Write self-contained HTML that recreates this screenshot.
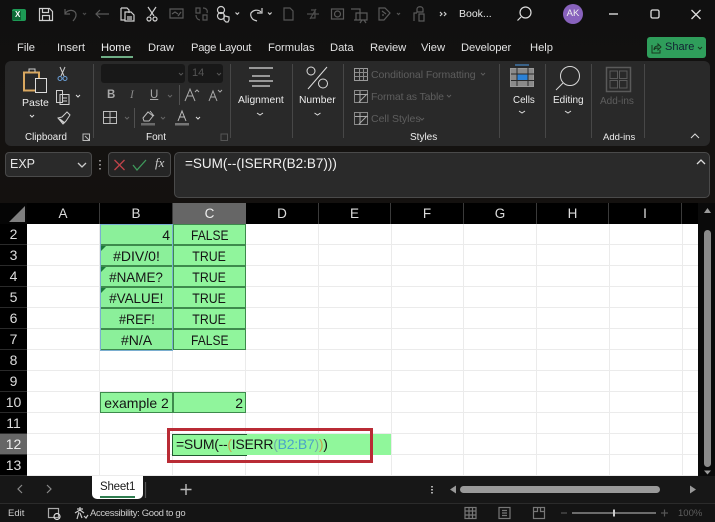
<!DOCTYPE html>
<html><head><meta charset="utf-8"><style>
*{box-sizing:border-box}
html,body{margin:0;padding:0;background:#111}
body{width:715px;height:522px;overflow:hidden;position:relative;font-family:"Liberation Sans",sans-serif;color:#e6e6e6}
.a{position:absolute;white-space:nowrap}
.m{font-size:11.2px;color:#e2e2e2;top:42px}
.l{font-size:10.5px;color:#ededed;text-align:center}
.d{font-size:10.5px;color:#5e5e5e}
svg{position:absolute;overflow:visible}
.c{position:absolute;height:21px;font-size:14px;color:#151515;line-height:21px;text-align:center;background:#90f59c;border:1px solid #3d8a4c;white-space:nowrap}
.s{display:inline-block;transform:scaleX(.86)}
.h{position:absolute;left:0;width:27px;height:21px;background:#000;color:#ddd;font-size:14px;line-height:21px;text-align:center;border-bottom:1px solid #2a2a2a}
.ch{position:absolute;top:203px;height:21px;background:#000;color:#ddd;font-size:13.5px;line-height:21px;text-align:center;border-right:1px solid #3a3a3a}
.tri{position:absolute;width:0;height:0;border-top:5px solid #1b7a3a;border-right:5px solid transparent}
</style></head><body>
<div class="a" style="left:0;top:0;width:715px;height:204px;background:linear-gradient(#101010,#141211 60%,#14110f)"></div>

<!-- title bar -->
<svg style="left:0;top:0" width="715" height="36" fill="none" stroke="#cfcfcf" stroke-width="1.200">
<rect x="12" y="9" width="14" height="12" rx="2" fill="#1d9a55" stroke="none"/>
<rect x="12" y="11" width="9" height="9" fill="#0e6a38" stroke="none"/>
<path d="M39.500 8.500h10l3 3v9h-13z M42.500 8.500v4h6v-4 M42.500 20.500v-5h7v5"/>
<path d="M65 9v5h5 M65 14c2-5 11-5 11 1 0 3-1.500 4-3 6" stroke="#5a5a5a"/>
<path d="M83 13l1.500 1.500 1.500-1.500" stroke="#4a4a4a"/>
<path d="M96 14h13 M100 10l-4 4 4 4" stroke="#5a5a5a"/>
<path d="M121 8h6l2 2v3 M121 8v12h4 M125 12h6l3 3v6h-9z M127 17h5 M127 19h5"/>
<path d="M148 7l6 9 M156 7l-6 9"/><circle cx="149" cy="19" r="2"/><circle cx="155" cy="19" r="2"/>
<path d="M170 9h13v9h-13z M172 14l3-2 3 2 M178 16l3-4" stroke="#5a5a5a"/>
<path d="M196 8h4v5h-4z M203 15h4v5h-4z M203 8c3 0 5 2 4 5 M196 15c0 3 2 5 4 5" stroke="#555"/>
<circle cx="221" cy="10" r="3.500"/><circle cx="221" cy="16" r="3.500"/><path d="M224 14v6l2 2h2l1-2v-3l-4-1"/>
<path d="M235.500 12.500l1.800 1.800 1.800-1.800"/>
<path d="M262 8v5h-5 M261 12c-3-3-8-2-10 1-1 3 1 6 3 7l3 1"/>
<path d="M268 12.500l1.800 1.800 1.800-1.800"/>
<path d="M284 8h6l3 3v9h-9z" stroke="#555"/>
<path d="M307 14h12 M310 19l6-10 M311 10h4v8h-4" stroke="#4e4e4e"/>
<rect x="331.500" y="9" width="12" height="10" stroke="#5a5a5a"/><circle cx="337.500" cy="14" r="3" stroke="#5a5a5a"/>
<path d="M351 9h9v11h-6 M356 13h11v7h-11z M362 20l-2 3 M364 20l2 3" stroke="#5a5a5a"/>
<path d="M379 8h6l5 5-6 7h-5z M382 11l4 3 M382 15h2" stroke="#5a5a5a"/><path d="M397 13l1.500 1.500 1.500-1.500" stroke="#555"/>
<path d="M414 21v-8h3 M417 9c0-3 6-3 6 0v3h-6z M419 14h5v7h-5z" stroke="#5a5a5a"/>
<path d="M440 12l2 2-2 2 M444 12l2 2-2 2" stroke="#ccc"/>
<circle cx="525.500" cy="12.500" r="5.500" stroke="#ddd"/><path d="M521 17l-3.500 3.500" stroke="#ddd"/>
<path d="M609 14h9" stroke="#ccc" stroke-width="1.500"/>
<rect x="651" y="10" width="8" height="8" rx="1.500" stroke="#ddd" stroke-width="1.300"/>
<path d="M691.500 10l9 9 M700.500 10l-9 9" stroke="#ddd" stroke-width="1.300"/>
</svg>
<div class="a" style="left:15px;top:10px;font-size:8px;font-weight:bold;color:#fff">X</div>
<div class="a" style="left:459px;top:8px;font-size:10.500px;color:#e8e8e8">Book...</div>
<div class="a" style="left:563px;top:4px;width:20px;height:20px;border-radius:50%;background:#8862bd;color:#eee;font-size:9.500px;line-height:20px;text-align:center">AK</div>

<!-- menu -->
<div class="a m" style="left:17px">File</div>
<div class="a m" style="left:57px">Insert</div>
<div class="a m" style="left:101px;color:#f2f2f2">Home</div>
<div class="a" style="left:101px;top:56px;width:32px;height:2px;background:#6fae85"></div>
<div class="a m" style="left:148px">Draw</div>
<div class="a m" style="left:191px;letter-spacing:-.25px">Page Layout</div>
<div class="a m" style="left:268px">Formulas</div>
<div class="a m" style="left:330px">Data</div>
<div class="a m" style="left:370px;letter-spacing:-.1px">Review</div>
<div class="a m" style="left:421px">View</div>
<div class="a m" style="left:461px;letter-spacing:-.1px">Developer</div>
<div class="a m" style="left:530px">Help</div>
<div class="a" style="left:647px;top:37px;width:59px;height:21px;border-radius:3px;background:#2f9e5b"></div>
<div class="a" style="left:665px;top:41px;font-size:11px;color:#123">Share</div>
<svg style="left:647px;top:37px" width="59" height="21" fill="none" stroke="#17381f" stroke-width="1"><path d="M5 8v8h8v-3 M7 13c0-3 2-4 4-4v-2l3 3-3 3v-2c-2 0-3 0-4 2"/><path d="M51 10l2 2 2-2"/></svg>

<!-- ribbon -->
<div class="a" style="left:5px;top:61px;width:705px;height:85px;background:#292929;border-radius:6px"></div>
<svg style="left:0;top:58px" width="715" height="90" fill="none" stroke="#d0d0d0" stroke-width="1">
<path d="M93.500 6v74 M230.500 6v74 M292.500 6v74 M343.500 6v74 M499.500 6v74 M545.500 6v74 M591.500 6v74 M644.500 6v74" stroke="#474747"/>
<path d="M24 14.500h15v18h-15z" stroke="#d9a860" stroke-width="2"/><path d="M29 14v-3h6v3" stroke="#ccc"/><rect x="35.500" y="20.500" width="11" height="14" fill="#292929" stroke="#ddd"/>
<path d="M30 57l2 2 2-2 M76 37l2 2 2-2" stroke="#ddd"/>
<path d="M60 9l4 9 M65 9l-4 9" stroke="#ccc"/><circle cx="60" cy="20.500" r="2" stroke="#6a9fd8"/><circle cx="65" cy="20.500" r="2" stroke="#6a9fd8"/>
<path d="M56.500 32.500h6v12h-6z M60 36.500h9v10h-9z M62 40h5 M62 43h5" stroke="#cfcfcf"/>
<path d="M58 60l6 5 M58 60l4-1 5-5 3 3-4 6-3 3z M60 61l5 4" stroke="#cfcfcf"/>
<rect x="103.500" y="53.500" width="13" height="12" stroke="#bdbdbd"/><path d="M110 53v12 M104 59.500h12" stroke="#bdbdbd"/>
<path d="M125 59l2 2 2-2 M161 59l2 2 2-2 M168 37l2 2 2-2" stroke="#666"/>
<path d="M143 60l5-6 5 4-4 5h-5z M150 53l4 5" stroke="#bdbdbd"/>
<rect x="141" y="65" width="14" height="2.500" fill="#6a6a6a" stroke="none"/>
<rect x="175" y="65" width="14" height="2.500" fill="#777" stroke="none"/>
<path d="M178 63l4-10 4 10 M179 59h6" stroke="#bdbdbd"/>
<path d="M196 59l2 2 2-2" stroke="#ddd"/>
<path d="M179.500 27v20 M134.500 50v20" stroke="#505050"/>
<path d="M185 43l5-12 5 12 M187 38h6 M195 34l2-2 2 2" stroke="#aaa"/>
<path d="M209 43l4-10 4 10 M210.500 39h5 M218 32l2 2 2-2" stroke="#aaa"/>
<rect x="83" y="76" width="6.500" height="6.500" stroke="#bbb"/><path d="M85 78l4 4" stroke="#bbb"/>
<rect x="221" y="76" width="6.500" height="6.500" stroke="#555"/>
<path d="M249 10h24 M252 18h18 M249 23h24 M252 28h18" stroke="#bdbdbd" stroke-width="1.500"/>
<path d="M257 55l3 2 3-2 M314.500 55l3 2 3-2 M519 53l3 2 3-2 M565 53l3 2 3-2" stroke="#ddd"/>
<circle cx="311" cy="13" r="4" stroke="#ddd"/><circle cx="323" cy="25.500" r="4.500" stroke="#ddd"/><path d="M327 9l-19 22" stroke="#ddd"/>
<rect x="354.500" y="10.500" width="13" height="12" stroke="#9a9a9a"/><path d="M359.500 10v12 M363.500 10v12 M355 14.500h13 M355 18.500h13" stroke="#8a8a8a"/>
<rect x="354.500" y="32.500" width="13" height="12" stroke="#8a8a8a"/><path d="M355 36.500h13 M360 33v12 M359 44l8-8" stroke="#aaa"/>
<rect x="354.500" y="54.500" width="13" height="12" stroke="#8a8a8a"/><path d="M355 58.500h13 M360 55v12 M359 66l8-8" stroke="#aaa"/>
<path d="M481 15l2 2 2-2 M447 37l2 2 2-2 M420 60l2 2 2-2" stroke="#5e5e5e"/>
<rect x="510.500" y="10.500" width="23" height="18" fill="#8a8a8a" stroke="#999"/><rect x="517" y="16.500" width="11" height="6" fill="#2b82d8" stroke="none"/><path d="M511 16h23 M511 22.500h23 M517 10v18 M528 10v18" stroke="#292929"/><path d="M515 7h14" stroke="#4a9ae8"/>
<circle cx="570" cy="18" r="9.500" stroke="#d8d8d8"/><path d="M563 25l-7 7" stroke="#d8d8d8"/>
<rect x="606.500" y="9.500" width="24" height="24" stroke="#5a5a5a" stroke-width="1.500"/><rect x="610" y="13" width="7.500" height="7.500" stroke="#5a5a5a"/><rect x="619.500" y="13" width="7.500" height="7.500" stroke="#5a5a5a"/><rect x="610" y="22.500" width="7.500" height="7.500" stroke="#5a5a5a"/><rect x="619.500" y="22.500" width="7.500" height="7.500" stroke="#5a5a5a"/>
<path d="M691 80l4-4 4 4" stroke="#ddd"/>
</svg>
<div class="a" style="left:101px;top:64px;width:84px;height:19px;background:#181818;border-radius:3px"></div>
<div class="a" style="left:188px;top:64px;width:35px;height:19px;background:#181818;border-radius:3px"></div>
<div class="a d" style="left:192px;top:67px;font-size:11px;color:#555">14</div>
<svg style="left:0;top:58px" width="230" height="30" fill="none" stroke="#555"><path d="M179 15l2 2 2-2 M217 15l2 2 2-2"/></svg>
<div class="a l" style="left:22px;top:97px;font-size:10.500px">Paste</div>
<div class="a l" style="left:25px;top:132px;font-size:9.800px">Clipboard</div>
<div class="a l" style="left:146px;top:132px;font-size:10px">Font</div>
<div class="a" style="left:107px;top:89px;font-size:11.500px;font-weight:bold;color:#a8a8a8">B</div>
<div class="a" style="left:130px;top:89px;font-size:11.500px;font-style:italic;font-family:'Liberation Serif',serif;color:#888">I</div>
<div class="a" style="left:150px;top:89px;font-size:11.500px;text-decoration:underline;color:#a8a8a8">U</div>
<div class="a l" style="left:238px;top:95px;font-size:10.300px">Alignment</div>
<div class="a l" style="left:299px;top:95px;font-size:10.300px">Number</div>
<div class="a d" style="left:371px;top:69px;letter-spacing:-.05px">Conditional Formatting</div>
<div class="a d" style="left:371px;top:91px;letter-spacing:-.15px">Format as Table</div>
<div class="a d" style="left:371px;top:113px">Cell Styles</div>
<div class="a l" style="left:410px;top:132px;font-size:10px">Styles</div>
<div class="a l" style="left:513px;top:95px;font-size:9.800px">Cells</div>
<div class="a l" style="left:553px;top:95px;font-size:10px">Editing</div>
<div class="a d" style="left:600px;top:96px;font-size:10px">Add-ins</div>
<div class="a l" style="left:603px;top:132px;font-size:9.500px">Add-ins</div>

<!-- formula bar -->
<div class="a" style="left:5px;top:152px;width:87px;height:25px;background:#2a2a2a;border:1px solid #4a4a4a;border-radius:4px;font-size:12.500px;line-height:23px;padding-left:4px">EXP</div>
<div class="a" style="left:108px;top:152px;width:63px;height:25px;background:#252525;border:1px solid #4a4a4a;border-radius:4px"></div>
<div class="a" style="left:174px;top:152px;width:536px;height:46px;background:#2a2a2a;border:1px solid #4a4a4a;border-radius:5px"></div>
<div class="a" style="left:185px;top:156px;font-size:13.500px;color:#f0f0f0">=SUM(--(ISERR(B2:B7)))</div>
<svg style="left:0;top:148px" width="715" height="40" fill="none" stroke-width="1.300">
<path d="M78 15l4 4 4-4" stroke="#ccc"/>
<path d="M100 12v1.500 M100 16v1.500 M100 20v1.500" stroke="#ccc"/>
<path d="M114.500 12l10 10 M124.500 12l-10 10" stroke="#c0434a"/>
<path d="M133 17l4 5 9-10" stroke="#3f9a5c"/>
<path d="M697 16l4-4 4 4" stroke="#ddd"/>
</svg>
<div class="a" style="left:155px;top:155px;font-size:13px;font-style:italic;font-family:'Liberation Serif',serif;color:#ccc">fx</div>

<!-- grid -->
<div class="a" style="left:0;top:203px;width:715px;height:273px;background:#0a0a0a"></div>
<div class="a" style="left:27px;top:224px;width:671px;height:252px;background:#fff;background-image:repeating-linear-gradient(to bottom,transparent 0,transparent 20px,#ebebeb 20px,#ebebeb 21px)"></div>
<svg style="left:27px;top:224px" width="671" height="252" stroke="#ebebeb"><path d="M72.500 0v252 M145.500 0v252 M218.500 0v252 M291.500 0v252 M364.500 0v252 M436.500 0v252 M509.500 0v252 M582.500 0v252 M655.500 0v252"/></svg>
<div class="a" style="left:0;top:203px;width:27px;height:21px;background:#050505"></div>
<div class="a" style="left:9px;top:206px;width:0;height:0;border-bottom:16px solid #7f7f7f;border-left:16px solid transparent"></div>
<div class="ch" style="left:27px;width:73px">A</div>
<div class="ch" style="left:100px;width:73px">B</div>
<div class="ch" style="left:173px;width:73px;background:#666;color:#eee;border-right:0">C</div>
<div class="ch" style="left:246px;width:73px">D</div>
<div class="ch" style="left:319px;width:72px">E</div>
<div class="ch" style="left:391px;width:73px">F</div>
<div class="ch" style="left:464px;width:73px">G</div>
<div class="ch" style="left:537px;width:72px">H</div>
<div class="ch" style="left:609px;width:73px">I</div>
<div class="ch" style="left:682px;width:16px;border-right:0"></div>
<div class="h" style="top:224px">2</div>
<div class="h" style="top:245px">3</div>
<div class="h" style="top:266px">4</div>
<div class="h" style="top:287px">5</div>
<div class="h" style="top:308px">6</div>
<div class="h" style="top:329px">7</div>
<div class="h" style="top:350px">8</div>
<div class="h" style="top:371px">9</div>
<div class="h" style="top:392px">10</div>
<div class="h" style="top:413px">11</div>
<div class="h" style="top:434px;background:#666;color:#eee">12</div>
<div class="h" style="top:455px">13</div>

<div class="c" style="left:100px;top:224px;width:73px;text-align:right;padding-right:2px;background:#8bf09a">4</div>
<div class="c" style="left:173px;top:224px;width:73px"><span class="s">FALSE</span></div>
<div class="c" style="left:100px;top:245px;width:73px;background:#8bf09a">#DIV/0!</div>
<div class="c" style="left:173px;top:245px;width:73px"><span class="s" style="transform:scaleX(.88)">TRUE</span></div>
<div class="c" style="left:100px;top:266px;width:73px;background:#8bf09a"><span class="s" style="transform:scaleX(.96)">#NAME?</span></div>
<div class="c" style="left:173px;top:266px;width:73px"><span class="s" style="transform:scaleX(.88)">TRUE</span></div>
<div class="c" style="left:100px;top:287px;width:73px;background:#8bf09a"><span class="s" style="transform:scaleX(.96)">#VALUE!</span></div>
<div class="c" style="left:173px;top:287px;width:73px"><span class="s" style="transform:scaleX(.88)">TRUE</span></div>
<div class="c" style="left:100px;top:308px;width:73px;background:#8bf09a"><span class="s" style="transform:scaleX(.9)">#REF!</span></div>
<div class="c" style="left:173px;top:308px;width:73px"><span class="s" style="transform:scaleX(.88)">TRUE</span></div>
<div class="c" style="left:100px;top:329px;width:73px;background:#8bf09a">#N/A</div>
<div class="c" style="left:173px;top:329px;width:73px"><span class="s">FALSE</span></div>
<div class="tri" style="left:101px;top:246px"></div>
<div class="tri" style="left:101px;top:267px"></div>
<div class="tri" style="left:101px;top:288px"></div>
<div class="a" style="left:100px;top:224px;width:73px;height:127px;border:1px solid #7aaed0"></div>
<div class="c" style="left:100px;top:392px;width:73px">example 2</div>
<div class="c" style="left:173px;top:392px;width:73px;text-align:right;padding-right:2px">2</div>

<div class="a" style="left:172px;top:434px;width:219px;height:21px;background:#90f79b"></div>
<div class="a" style="left:172px;top:434px;width:75px;height:22px;border:1px solid #1f5a30;border-right:0"></div>
<div class="a" style="left:176px;top:436px;font-size:14px;letter-spacing:-.27px;color:#151515">=SUM(--<span style="color:#c9a04a">(</span>ISERR<span style="color:#6fb0a8">(</span><span style="color:#4aa3c8">B2:B7</span><span style="color:#6fb0a8">)</span><span style="color:#c9a04a">)</span>)</div>
<div class="a" style="left:167px;top:428px;width:206px;height:35px;border:3px solid #b92b35"></div>

<!-- scrollbar -->
<svg style="left:698px;top:203px" width="17" height="273" fill="none">
<rect x="6" y="27" width="7" height="237" rx="3.500" fill="#8a8a8a"/>
<path d="M6 10l3.500-5 3.500 5z" fill="#9a9a9a"/>
<path d="M6 267.500l3.500 4 3.500-4z" fill="#9a9a9a"/>
</svg>

<!-- sheet bar -->
<div class="a" style="left:0;top:476px;width:715px;height:27px;background:#171717"></div>
<div class="a" style="left:0;top:503px;width:715px;height:19px;background:#141414;border-top:1px solid #2b2b2b"></div>
<div class="a" style="left:92px;top:476px;width:51px;height:23px;background:#fff;border-radius:0 0 5px 5px"></div>
<div class="a" style="left:100px;top:481px;font-size:11.500px;letter-spacing:-.2px;color:#1a1a1a">Sheet1</div>
<div class="a" style="left:100px;top:496px;width:35px;height:2px;background:#2f7d50"></div>
<svg style="left:0;top:476px" width="715" height="46" fill="none" stroke="#8a8a8a" stroke-width="1.200">
<path d="M22 9l-4 4 4 4 M47 9l4 4-4 4"/>
<path d="M145.500 6v16" stroke="#555"/>
<path d="M186 8v11 M180.500 13.500h11" stroke="#bbb" stroke-width="1.400"/>
<path d="M432 10v1.500 M432 13v1.500 M432 16v1.500" stroke="#ddd" stroke-width="1.500"/>
<path d="M450 13.500l6-4v8z" fill="#999" stroke="none"/>
<rect x="460" y="10" width="200" height="7" rx="3.500" fill="#9a9a9a" stroke="none"/>
<path d="M690 9.500l6 4-6 4z" fill="#999" stroke="none"/>
<rect x="48.500" y="32.500" width="10" height="9" stroke="#aaa"/><circle cx="57" cy="40.500" r="3" stroke="#ddd"/>
<path d="M77 33h6 M80 31v4 M75 37l5-3 4 3 M79 36l-2 7 M80 37l2 5 M84 40l2 2 2-3" stroke="#c8c8c8"/>
<rect x="465" y="31.500" width="11" height="11" stroke="#777"/><path d="M469 31.500v11 M472.500 31.500v11 M465 35h11 M465 39h11" stroke="#777"/>
<rect x="499" y="31.500" width="11" height="11" stroke="#777"/><path d="M502 34.500h5 M502 37h5 M502 39.500h5" stroke="#777"/>
<rect x="533.500" y="31.500" width="11" height="11" stroke="#777"/><path d="M533.500 35.500h4v-4 M540.500 31.500v4h4" stroke="#777"/>
<path d="M561 37h6" stroke="#555"/>
<path d="M572 37h84" stroke="#8a8a8a" stroke-width="1.500"/>
<path d="M614 33.500v7" stroke="#ccc" stroke-width="2"/>
<path d="M661 37h7 M664.500 33.500v7" stroke="#555"/>
</svg>
<div class="a" style="left:8px;top:508px;font-size:9.500px;color:#ccc">Edit</div>
<div class="a" style="left:90px;top:508px;font-size:9.500px;letter-spacing:-.35px;color:#ccc">Accessibility: Good to go</div>
<div class="a" style="left:678px;top:508px;font-size:9.500px;color:#5e5e5e">100%</div>
</body></html>
